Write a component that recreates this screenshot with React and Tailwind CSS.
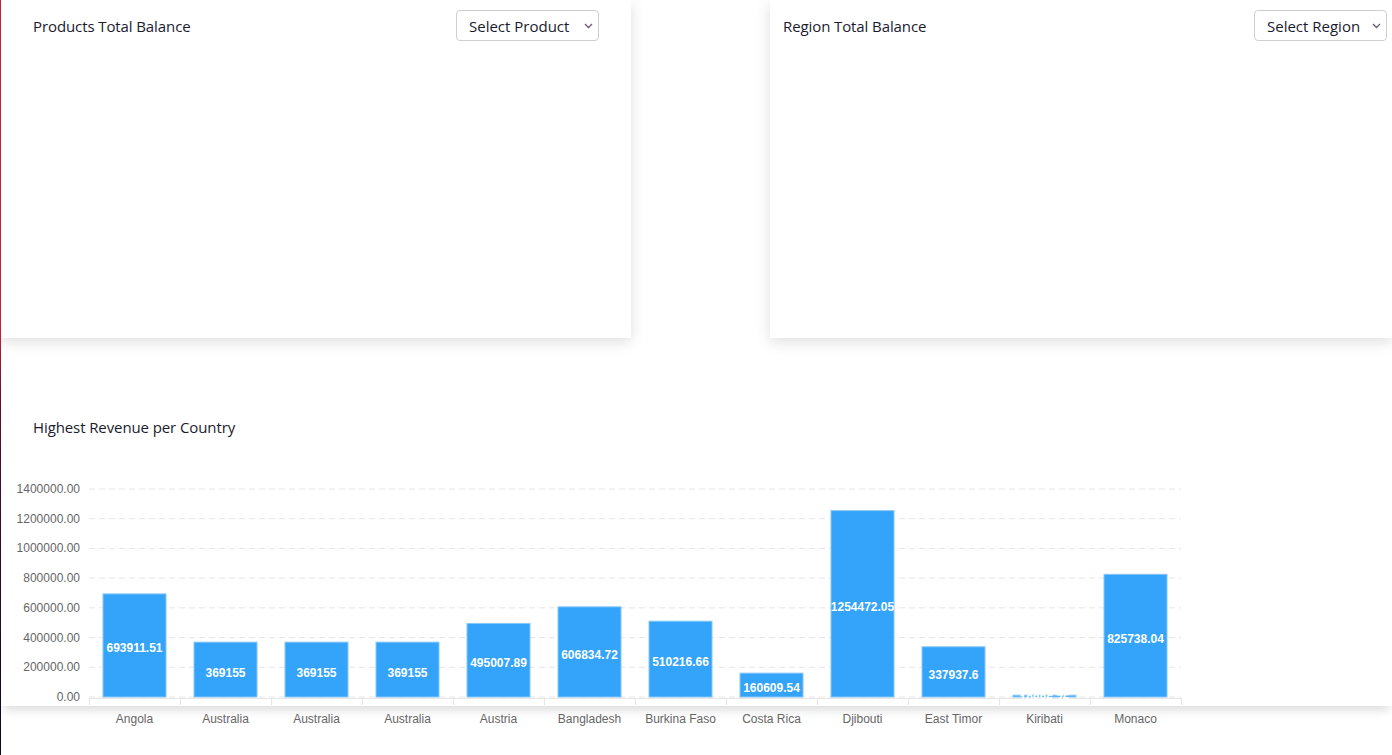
import React from "react";

const data = [
  ["Angola", 693911.51, "693911.51"],
  ["Australia", 369155, "369155"],
  ["Australia", 369155, "369155"],
  ["Australia", 369155, "369155"],
  ["Austria", 495007.89, "495007.89"],
  ["Bangladesh", 606834.72, "606834.72"],
  ["Burkina Faso", 510216.66, "510216.66"],
  ["Costa Rica", 160609.54, "160609.54"],
  ["Djibouti", 1254472.05, "1254472.05"],
  ["East Timor", 337937.6, "337937.6"],
  ["Kiribati", 12000, "10886.75"],
  ["Monaco", 825738.04, "825738.04"],
];

const X0 = 88;
const X1 = 1180;
const Y0 = 227;
const PX = 208 / 1400000;
const CW = (X1 - X0) / 12;
const ticks = [1400000, 1200000, 1000000, 800000, 600000, 400000, 200000, 0];

function Chart() {
  return (
    <svg width="1200" height="260" className="block overflow-visible" style={{ fontFamily: '"Liberation Sans", Arial, sans-serif' }}>
      {ticks.map((t) => {
        const y = Y0 - t * PX;
        return (
          <g key={t}>
            <line x1={X0} x2={X1} y1={y} y2={y} stroke="#e6e6e6" strokeWidth="1" strokeDasharray="6 4" />
            <text x={79} y={y} textAnchor="end" dominantBaseline="central" fontSize="12" fill="#666">
              {t.toFixed(2)}
            </text>
          </g>
        );
      })}
      <line x1={X0} x2={X1} y1={Y0 + 1.5} y2={Y0 + 1.5} stroke="#e6e6e6" strokeWidth="1" />
      {Array.from({ length: 13 }).map((_, i) => (
        <line key={i} x1={X0 + i * CW + 0.5} x2={X0 + i * CW + 0.5} y1={Y0 + 1} y2={Y0 + 8} stroke="#e6e6e6" strokeWidth="1" />
      ))}
      {data.map(([name, v, label], i) => {
        const cx = X0 + CW * (i + 0.5);
        const h = v * PX;
        const bw = 63;
        return (
          <g key={i}>
            <rect x={cx - bw / 2} y={Y0 - h} width={bw} height={h} fill="#34a4fb" stroke="#86c7f7" strokeWidth="1" />
            <text x={cx} y={Y0 - h / 2 + 3} textAnchor="middle" dominantBaseline="central" fontSize="12" fontWeight="700" fill="#fff">
              {label}
            </text>
            <text x={cx} y={249} textAnchor="middle" dominantBaseline="central" fontSize="12" fill="#666">
              {name}
            </text>
          </g>
        );
      })}
    </svg>
  );
}

function Chevron() {
  return (
    <svg width="9" height="6" viewBox="0 0 9 6" className="block">
      <polyline points="1,1 4.5,4.5 8,1" fill="none" stroke="#6e5f80" strokeWidth="1.4" />
    </svg>
  );
}

function Select({ label, w }) {
  return (
    <div className={`flex items-center justify-between h-[31px] border border-[#cfcfcf] rounded-[4px] bg-white pl-[12px] pr-[5px] ${w}`}>
      <span className="text-[15px] text-[#1b1b2e] leading-none pt-[1px]">{label}</span>
      <Chevron />
    </div>
  );
}

export default function App() {
  return (
    <div className="relative min-h-[755px] bg-white overflow-hidden" style={{ fontFamily: '"Open Sans", "Noto Sans", sans-serif' }}>
      <div className="absolute left-0 top-0 bottom-0 w-[1px] bg-[linear-gradient(to_bottom,#c61b3d_0%,#c61b3d_44%,#5e0c2c_54%,#2c0a28_75%,#0a0a1a_100%)] z-10" />
      <div className="flex pl-[1px]">
        <div className="w-[630px] h-[338px] bg-white shadow-[0_4px_14px_rgba(0,0,0,0.13)] flex justify-between items-start pl-[32px] pr-[32px] pt-[10px]">
          <div className="text-[15px] text-[#1b1b2e] h-[31px] pt-[2px] flex items-center tracking-[-0.1px]">Products Total Balance</div>
          <Select label="Select Product" w="w-[143px]" />
        </div>
        <div className="ml-[139px] flex-1 h-[338px] bg-white shadow-[0_4px_14px_rgba(0,0,0,0.13)] flex justify-between items-start pl-[13px] pr-[5px] pt-[10px]">
          <div className="text-[15px] text-[#1b1b2e] h-[31px] pt-[2px] flex items-center tracking-[-0.1px]">Region Total Balance</div>
          <Select label="Select Region" w="w-[133px]" />
        </div>
      </div>
      <div className="ml-[1px] mt-[40px] h-[328px] bg-white shadow-[0_6px_10px_-3px_rgba(0,0,0,0.16)] flex flex-col pt-[37px]">
        <div className="pl-[32px] text-[15px] leading-[24px] text-[#1b1b2e] tracking-[-0.1px]">Highest Revenue per Country</div>
        <div className="mt-[31px]">
          <Chart />
        </div>
      </div>
    </div>
  );
}
